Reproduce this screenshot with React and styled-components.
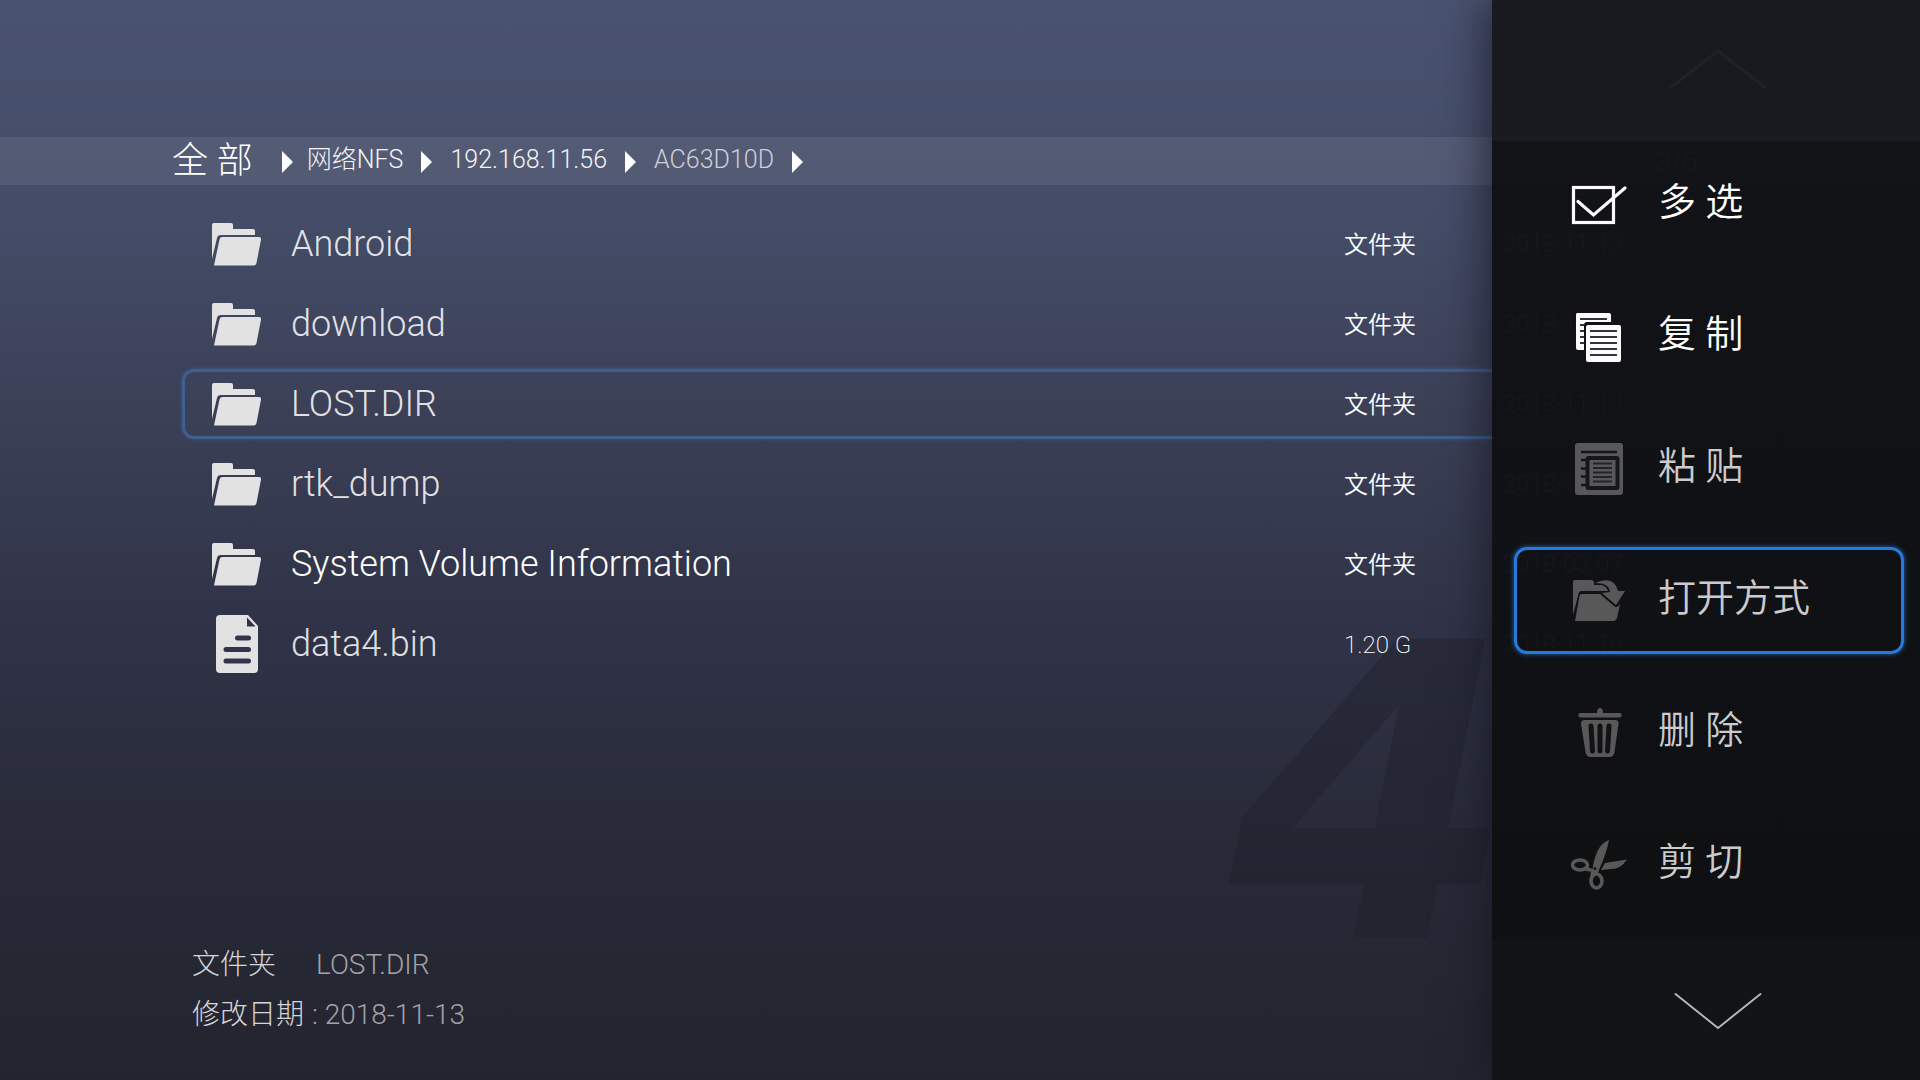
import styled, { createGlobalStyle, css } from "styled-components";

const GlobalStyle = createGlobalStyle`
  * {
    box-sizing: border-box;
  }
  body {
    margin: 0;
    background: #23242f;
    color: #fff;
    font-family: Roboto, "Noto Sans CJK SC", sans-serif;
    font-weight: 300;
  }
  button {
    font: inherit;
    color: inherit;
    background: none;
    border: 0;
    padding: 0;
  }
  svg {
    display: block;
  }
`;

const Page = styled.div`
  position: relative;
  min-height: 100vh;
  overflow: hidden;
  display: flex;
  flex-direction: column;
  padding-top: 137px;
  background: linear-gradient(
    #49526f 0%,
    #444c67 20%,
    #3b4057 38%,
    #303347 58%,
    #282a38 78%,
    #23242f 100%
  );
`;

const Watermark = styled.div`
  position: absolute;
  right: 404px;
  bottom: 133px;
  height: 300px;
  line-height: 300px;
  font-family: "DejaVu Sans", sans-serif;
  font-weight: 700;
  font-style: oblique;
  font-size: 412px;
  color: #1e1f29;
  opacity: 0.4;
`;

const PathBar = styled.nav`
  position: relative;
  display: flex;
  align-items: center;
  height: 48px;
  padding: 0 223px 0 172px;
  background: rgba(255, 255, 255, 0.08);
`;

const Root = styled.a`
  margin-right: 14px;
  font-size: 36px;
  line-height: 48px;
  color: #fff;
  text-decoration: none;
`;

const Crumb = styled.a`
  padding: 0 18px 2px;
  font-size: 25px;
  line-height: 44px;
  color: ${(props) => (props.$dim ? "rgba(255, 255, 255, 0.72)" : "#f4f4f6")};
  text-decoration: none;
`;

const Arrow = styled.i`
  margin-top: 2px;
  border-left: 11px solid #fff;
  border-top: 11px solid transparent;
  border-bottom: 11px solid transparent;

  ${Root} + & {
    margin-left: 15px;
    margin-right: -4px;
  }
`;

const Count = styled.span`
  margin-left: auto;
  font-size: 28px;
  font-weight: 200;
`;

const FileTable = styled.table`
  position: relative;
  display: block;
  margin: 19px 182px 0;
`;

const FileBody = styled.tbody`
  display: block;
`;

const FileRow = styled.tr`
  display: grid;
  grid-template-columns: 79px 1fr 159px 232px;
  align-items: center;
  height: 70px;
  margin: 5px 0 10px;
  padding-left: 27px;
  border: 3px solid transparent;
  border-radius: 12px;
  ${(props) =>
    props.$selected &&
    css`
      border-color: #3f5f92;
      box-shadow: 0 0 4px rgba(63, 95, 146, 0.7);
    `}
`;

const Cell = styled.td`
  padding: 0;
  font-size: 24px;
  line-height: 36px;
`;

const TypeCell = styled(Cell)`
  padding-top: 1px;
  font-weight: ${(props) => (props.$thin ? 200 : 350)};
`;

const NameCell = styled(Cell)`
  font-size: 36px;
  line-height: 48px;
  color: ${(props) => (props.$dim ? "rgba(255, 255, 255, 0.86)" : "#fff")};
`;

const DateCell = styled(Cell)`
  font-weight: 200;
`;

const Details = styled.footer`
  position: relative;
  margin-top: auto;
  padding: 0 192px 40px;
  font-size: 28px;
  line-height: 50px;
  color: #a2a2a8;
`;

const DetailLine = styled.div`
  display: flex;
  gap: ${(props) => props.$gap}px;
`;

const Label = styled.span`
  color: #d6d6d8;
`;

const SidePanel = styled.aside`
  position: absolute;
  top: 0;
  right: 0;
  bottom: 0;
  width: 428px;
  display: grid;
  grid-template-rows: 141px 1fr 141px;
  box-shadow: -6px 0 40px rgba(20, 22, 32, 0.7);
`;

const ScrollButton = styled.button`
  display: flex;
  justify-content: center;
  padding-left: 24px;
  background: ${(props) =>
    props.$up ? "rgba(24, 26, 30, 0.98)" : "rgba(18, 19, 22, 0.98)"};
  padding-top: ${(props) => (props.$up ? 48 : 53)}px;
`;

const Menu = styled.div`
  display: flex;
  flex-direction: column;
  gap: 26px;
  padding: 10px 16px 0 22px;
  background: linear-gradient(rgba(16, 17, 20, 0.97), rgba(14, 15, 17, 0.97));
`;

const MenuItem = styled.button`
  display: grid;
  grid-template-columns: 83px 1fr;
  column-gap: 4px;
  align-items: center;
  height: 107px;
  margin-bottom: -1px;
  padding-left: 54px;
  border: 3px solid transparent;
  border-radius: 13px;
  text-align: left;
  color: ${(props) => (props.$disabled ? "#cbcbcd" : "#fff")};
  font-weight: 350;
  ${(props) =>
    props.$focused &&
    css`
      border-color: #2879dc;
      box-shadow: 0 0 5px rgba(40, 121, 220, 0.8);
    `}

  svg {
    color: ${(props) => (props.$disabled ? "#585858" : "#fdfafb")};
  }
`;

const MenuText = styled.span`
  font-size: 38px;
  line-height: 56px;
  padding-bottom: 6px;
`;

const FolderIcon = () => (
  <svg width="50" height="43" viewBox="0 0 50 43" fill="#e2e2e2">
    <path d="M0 36V2Q0 0 2 0H19Q21 0 21 2V6H41Q43 6 43 8V12H9Q5.500 12 5 15Z" />
    <path d="M10 14H47Q49.500 14 49 16.500L44.500 40Q44 42.500 41.500 42.500H2L7.500 16.500Q8 14 10 14Z" />
  </svg>
);

const FileIcon = () => (
  <svg width="50" height="58" viewBox="0 0 50 58">
    <path
      fill="#e2e2e2"
      fillRule="evenodd"
      d="M8 0H36L46 11V54Q46 58 42 58H8Q4 58 4 54V4Q4 0 8 0ZM35 2.500V11.500H43.500Z"
    />
    <path
      stroke="#32354a"
      strokeWidth="5"
      strokeLinecap="round"
      d="M25.500 23H36.500M14 34.500H36.500M14 46H36.500"
    />
  </svg>
);

const CheckIcon = () => (
  <svg width="56" height="52" viewBox="0 0 56 52" fill="none" stroke="currentColor">
    <rect x="2.500" y="8.500" width="40" height="35" strokeWidth="3.200" />
    <path d="M7 22.500L22.500 36L54 9" strokeWidth="3.200" strokeLinecap="round" />
  </svg>
);

const CopyIcon = () => (
  <svg width="56" height="52" viewBox="0 0 56 52" fill="currentColor">
    <path d="M6 2H38Q40 2 40 4V11H16Q13 11 13 14V39H7Q5 39 5 37V4Q5 2 6 2Z" />
    <rect x="15" y="14" width="35" height="37" rx="2" />
    <path
      d="M9 8H36M9 14H13M9 20H13M9 26H13M9 32H13M19 20H46M19 26H46M19 32H46M19 38H46M19 44H46"
      stroke="#33333a"
      strokeWidth="2"
    />
  </svg>
);

const PasteIcon = () => (
  <svg width="56" height="52" viewBox="0 0 56 52" fill="none">
    <rect x="4" y="0" width="48" height="52" rx="3" fill="currentColor" />
    <path
      d="M10 9H46M10 17H15M10 25.500H15M10 33.500H15M10 42H15"
      stroke="#15161e"
      strokeWidth="2.400"
    />
    <rect x="16.500" y="15" width="30" height="30" rx="1" stroke="#15161e" strokeWidth="4" />
    <path
      d="M22 20.500H41M22 25H41M22 29.500H41M22 34H41M22 38.500H41"
      stroke="#22232c"
      strokeWidth="1.800"
    />
  </svg>
);

const OpenWithIcon = () => (
  <svg width="56" height="52" viewBox="0 0 56 52" fill="currentColor">
    <path d="M2 40V7Q2 5 4 5H20Q23 5 23 7.500V10H31Q36 12 37 16H11Q8 16 7.500 19Z" />
    <path d="M10.500 19H29L43 31Q46 34 49 29L46 43Q45 46 42 46H4L8.500 21Q9 19 10.500 19Z" />
    <path
      d="M24 8Q43 0 47 16H54L45 30L31 18L39 17Q38 8 24 8Z"
      stroke="#121318"
      strokeWidth="2"
      paintOrder="stroke"
    />
  </svg>
);

const TrashIcon = () => (
  <svg width="56" height="52" viewBox="0 0 56 52" fill="currentColor">
    <path d="M9.500 6H26Q26 1 29 1T32 6H48.500A2.200 2.200 0 0 1 48.500 10.500H9.500A2.200 2.200 0 0 1 9.500 6Z" />
    <path d="M14 13H44Q48 13 47.500 17L43.500 45Q43 50 38 50H20Q15 50 14.500 45L10 17Q9.500 13 14 13Z" />
    <path
      d="M20 19L21.500 44M29 19V44M38 19L36.500 44"
      stroke="#111215"
      strokeWidth="5"
      strokeLinecap="round"
    />
  </svg>
);

const CutIcon = () => (
  <svg width="58" height="52" viewBox="0 0 58 52" fill="currentColor">
    <path d="M22 27Q26 5 38 1Q36 13 28 31L26 36H21Z" />
    <path d="M30 31L34 24L56 20.500Q50 30 40 30Z" />
    <g fill="none" stroke="currentColor" strokeWidth="3.600">
      <ellipse cx="9" cy="26" rx="7.500" ry="5" />
      <ellipse cx="25.500" cy="42" rx="5.500" ry="7" />
      <path d="M14 30L20 31M22 30L21 38" />
    </g>
    <circle cx="24" cy="29.500" r="1.500" fill="#111215" />
  </svg>
);

const crumbs = [
  { text: "网络NFS" },
  { text: "192.168.11.56" },
  { text: "AC63D10D", dim: true },
];

const files = [
  { name: "Android", type: "文件夹", date: "2018-11-13", dim: true },
  { name: "download", type: "文件夹", date: "2018-11-19", dim: true },
  { name: "LOST.DIR", type: "文件夹", date: "2018-11-13", dim: true, selected: true },
  { name: "rtk_dump", type: "文件夹", date: "2018-11-13", dim: true },
  { name: "System Volume Information", type: "文件夹", date: "2018-03-07" },
  { name: "data4.bin", size: "1.20 G", date: "2018-11-19", dim: true },
];

const menu = [
  { text: "多 选", Icon: CheckIcon },
  { text: "复 制", Icon: CopyIcon },
  { text: "粘 贴", Icon: PasteIcon, disabled: true },
  { text: "打开方式", Icon: OpenWithIcon, disabled: true, focused: true },
  { text: "删 除", Icon: TrashIcon, disabled: true },
  { text: "剪 切", Icon: CutIcon, disabled: true },
];

const App = () => {
  const selected = files.find((file) => file.selected);

  return (
    <>
      <GlobalStyle />
      <Page>
        <Watermark aria-hidden="true">4</Watermark>
        <PathBar>
          <Root href="#all">全 部</Root>
          <Arrow />
          {crumbs.map((crumb) => [
            <Crumb key={crumb.text} href={`#${crumb.text}`} $dim={crumb.dim}>
              {crumb.text}
            </Crumb>,
            <Arrow key={`${crumb.text}-arrow`} />,
          ])}
          <Count>3/6</Count>
        </PathBar>

        <FileTable>
          <FileBody>
            {files.map((file) => (
              <FileRow key={file.name} $selected={file.selected}>
                <Cell>{file.size ? <FileIcon /> : <FolderIcon />}</Cell>
                <NameCell $dim={file.dim}>{file.name}</NameCell>
                <TypeCell $thin={!!file.size}>{file.type || file.size}</TypeCell>
                <DateCell>{file.date}</DateCell>
              </FileRow>
            ))}
          </FileBody>
        </FileTable>

        <Details>
          <DetailLine $gap={40}>
            <Label>{selected.type}</Label>
            <span>{selected.name}</span>
          </DetailLine>
          <DetailLine $gap={8}>
            <Label>修改日期</Label>
            <span>: {selected.date}</span>
          </DetailLine>
        </Details>

        <SidePanel>
          <ScrollButton $up aria-label="上">
            <svg width="100" height="44" viewBox="0 0 100 44" fill="none">
              <path d="M2 40L50 3L98 40" stroke="#1d222a" strokeWidth="3" />
            </svg>
          </ScrollButton>
          <Menu>
            {menu.map(({ text, Icon, disabled, focused }) => (
              <MenuItem key={text} $disabled={disabled} $focused={focused}>
                <Icon />
                <MenuText>{text}</MenuText>
              </MenuItem>
            ))}
          </Menu>
          <ScrollButton aria-label="下">
            <svg width="88" height="40" viewBox="0 0 88 40" fill="none">
              <path
                d="M1.500 2L44 36L86.500 2"
                stroke="#b4b4b6"
                strokeWidth="2"
                strokeLinecap="round"
              />
            </svg>
          </ScrollButton>
        </SidePanel>
      </Page>
    </>
  );
};

export default App;
